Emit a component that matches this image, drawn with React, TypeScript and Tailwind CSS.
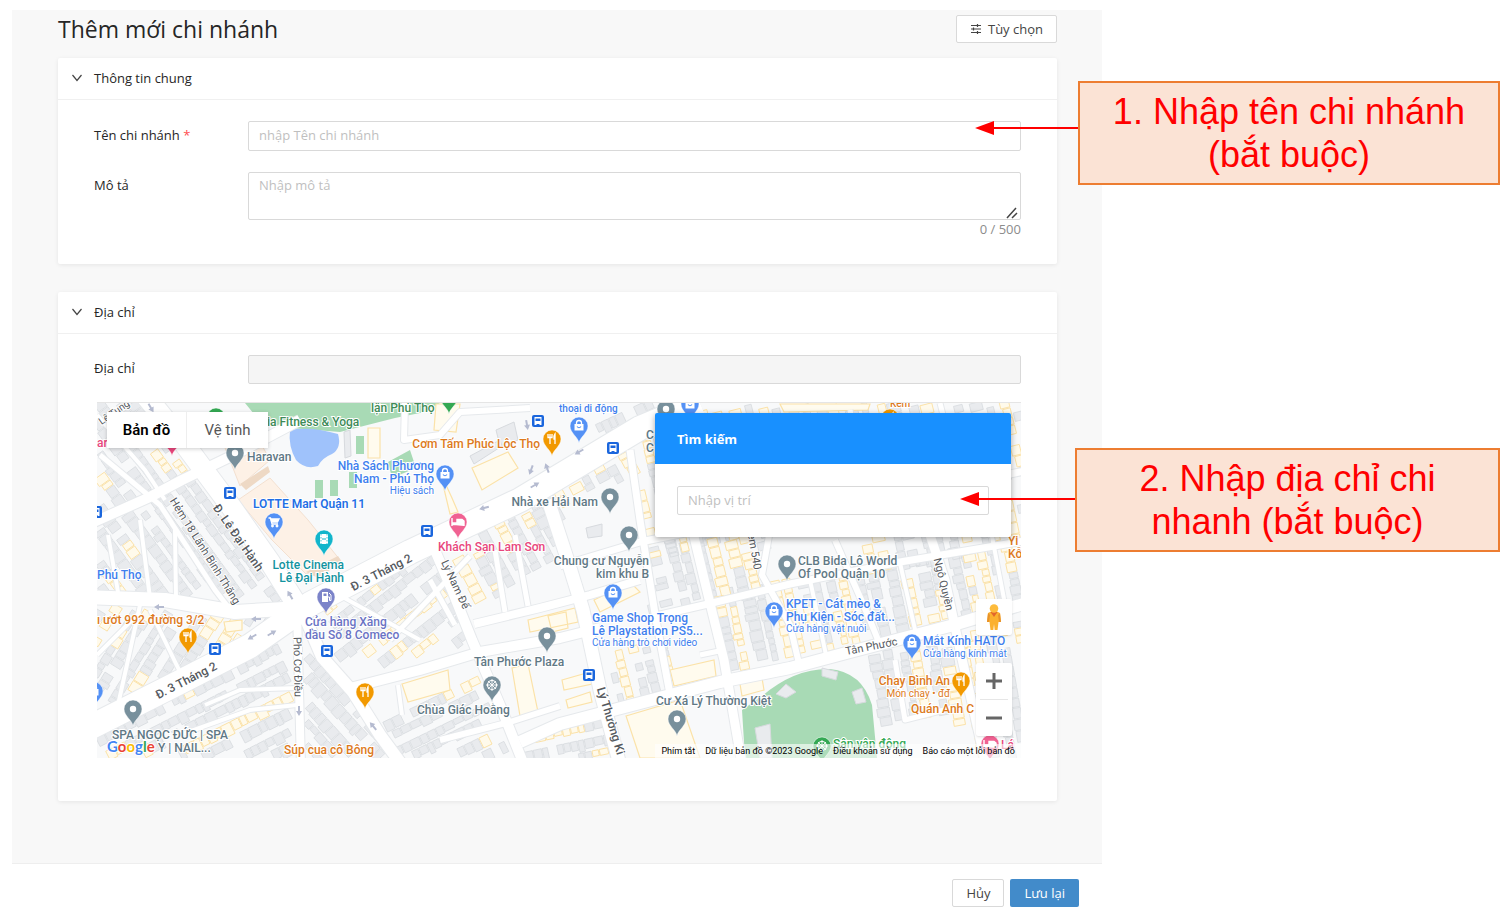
import type { ReactNode } from 'react'
import { clsx } from 'clsx'

type Point = [number, number]

interface Block {
  shape: Point[]
  angle: number
  yellow: number
  seed: number
}

interface Road {
  d: string
  width: number
}

type PinIcon = 'dot' | 'bag' | 'food' | 'bed' | 'cart' | 'film' | 'gas' | 'wheel'

interface Pin {
  x: number
  y: number
  color: string
  icon: PinIcon
}

interface Place {
  x: number
  y: number
  color: string
  lines: string[]
  sub?: string
  anchor?: 'start' | 'middle' | 'end'
  bold?: boolean
  size?: number
}

const SLATE = '#78909c'
const SLATE_TEXT = '#5f7885'
const BLUE = '#5491f5'
const BLUE_TEXT = '#3f7fee'
const ORANGE = '#f29900'
const ORANGE_TEXT = '#dd7a1c'
const PINK = '#f06292'
const GREEN = '#34a853'

// Blocks that are filled with rows of small houses
const blocks: Block[] = [
  { shape: [[97, 403], [150, 403], [180, 440], [240, 520], [288, 600], [97, 592]], angle: 54, yellow: 0.22, seed: 3 },
  { shape: [[97, 608], [285, 616], [225, 650], [97, 712]], angle: -58, yellow: 0.2, seed: 8 },
  { shape: [[97, 735], [290, 640], [290, 758], [97, 758]], angle: -27, yellow: 0.15, seed: 14 },
  { shape: [[306, 625], [395, 758], [306, 758]], angle: 48, yellow: 0.2, seed: 22 },
  { shape: [[318, 600], [440, 556], [470, 640], [350, 676]], angle: -38, yellow: 0.3, seed: 29 },
  { shape: [[376, 716], [480, 672], [508, 758], [400, 758]], angle: -26, yellow: 0.08, seed: 31 },
  { shape: [[450, 540], [640, 448], [640, 470], [560, 505], [555, 560], [470, 612]], angle: 62, yellow: 0.4, seed: 44 },
  { shape: [[612, 650], [664, 638], [670, 690], [614, 706]], angle: 76, yellow: 0.5, seed: 57 },
  { shape: [[524, 732], [604, 716], [614, 758], [528, 758]], angle: -12, yellow: 0.25, seed: 59 },
  { shape: [[640, 440], [700, 410], [1021, 403], [1021, 480], [640, 560]], angle: 76, yellow: 0.3, seed: 61 },
  { shape: [[640, 545], [760, 520], [770, 590], [650, 612]], angle: 76, yellow: 0.3, seed: 66 },
  { shape: [[714, 595], [772, 585], [900, 560], [1021, 540], [1021, 598], [850, 645], [730, 672]], angle: 78, yellow: 0.34, seed: 71 },
  { shape: [[860, 530], [1021, 500], [1021, 550], [870, 575]], angle: 78, yellow: 0.34, seed: 76 },
  { shape: [[866, 658], [1021, 618], [1021, 758], [972, 758], [955, 716], [880, 726]], angle: 80, yellow: 0.22, seed: 85 },
  { shape: [[600, 408], [690, 403], [650, 412], [600, 434]], angle: -25, yellow: 0.1, seed: 91 },
]

const roads: Road[] = [
  { d: 'M85 730 L180 682 L250 646 L310 604 L410 552 L520 500 L600 452 L640 428 L700 403', width: 24 },
  { d: 'M145 395 L180 438 L232 508 L270 562 L300 610', width: 20 },
  { d: 'M85 597 L165 600 L235 612 L300 608', width: 14 },
  { d: 'M297 610 L299 690 L301 765', width: 8 },
  { d: 'M304 615 L322 657 L353 692 L380 735 L402 765', width: 12 },
  { d: 'M350 688 L420 670 L480 652 L560 638 L600 628', width: 10 },
  { d: 'M434 548 L452 590 L472 640 L500 705 L524 765', width: 10 },
  { d: 'M474 624 L540 608 L590 595 L640 580', width: 8 },
  { d: 'M548 500 L566 555 L583 610 L600 690 L620 765', width: 13 },
  { d: 'M520 742 L560 724 L640 703 L720 682 L790 668 L850 652 L950 626 L1030 602', width: 12 },
  { d: 'M630 450 L640 520 L656 620 L670 694', width: 7 },
  { d: 'M690 520 L708 595 L724 660 L742 765', width: 9 },
  { d: 'M560 566 L640 542 L720 526 L880 500 L1030 470', width: 7 },
  { d: 'M656 616 L708 604 L790 584 L900 562 L1030 540', width: 7 },
  { d: 'M770 530 L762 575 L790 625 L800 668', width: 6 },
  { d: 'M835 540 L870 620 L880 645', width: 6 },
  { d: 'M925 520 L945 580 L960 650 L986 765', width: 9 },
  { d: 'M85 526 L150 497 L182 480 L240 452 L300 420', width: 10 },
  { d: 'M100 455 L160 505 L215 590 L232 612', width: 5 },
  { d: 'M97 415 L145 470 L165 500', width: 4 },
  { d: 'M108 535 L118 592 M140 520 L150 598 M175 530 L176 600', width: 4 },
  { d: 'M140 605 L128 660 L118 705 M150 610 L180 672 M97 655 L140 612', width: 4 },
  { d: 'M205 705 L240 690 L297 688 M180 735 L250 710 L297 705', width: 4 },
  { d: 'M405 403 L404 440 L440 435 L460 412 L530 408', width: 6 },
  { d: 'M396 560 L430 530 M390 640 L470 556 M430 580 L455 625', width: 5 },
  { d: 'M398 685 L402 715 M330 590 L420 640', width: 4 },
  { d: 'M440 740 L510 722 L560 706', width: 6 },
  { d: 'M495 550 L505 612 M515 535 L528 606', width: 5 },
  { d: 'M700 440 L730 526 M760 420 L790 512 M850 410 L870 500 M940 403 L960 484', width: 5 },
  { d: 'M985 500 L1005 604 M900 563 L916 634 M810 580 L826 655', width: 4 },
  { d: 'M895 660 L905 720 L960 706 M700 655 L724 650', width: 5 },
]

const yellowBuildings = [
  'M436 404 L460 404 L456 432 L434 430Z',
  'M368 428 L380 428 L380 458 L368 458Z',
  'M472 468 L508 452 L518 468 L482 490Z',
  'M402 684 L448 670 L450 690 L408 702Z',
  'M512 668 L528 664 L538 712 L520 716Z',
  'M528 620 L575 608 L578 622 L530 632Z',
  'M548 616 L566 612 L568 628 L552 632Z',
  'M594 600 L630 582 L640 592 L600 612Z',
  'M562 680 L590 672 L592 684 L564 690Z',
  'M566 700 L590 692 L592 702 L568 708Z',
  'M670 670 L714 660 L716 676 L674 686Z',
  'M626 716 L680 700 L700 758 L640 758Z',
  'M740 684 L762 678 L764 690 L742 696Z',
  'M224 622 L242 620 L242 630 L226 632Z',
  'M780 404 L870 404 L868 410 L784 412Z',
  'M440 472 L452 498 L458 512 L450 514Z',
]

const greyBuildings = [
  'M496 430 L514 422 L518 440 L500 446Z',
  'M470 456 L500 440 L502 446 L474 464Z',
  'M586 528 L602 524 L602 536 L588 538Z',
  'M755 728 L770 724 L772 758 L760 758Z',
  'M344 432 L350 430 L351 456 L345 458Z',
  'M776 694 L786 684 L796 692 L786 698Z',
  'M822 668 L838 672 L836 680 L822 676Z',
  'M852 692 L862 688 L866 702 L856 704Z',
]

const pins: Pin[] = [
  { x: 235, y: 453, color: SLATE, icon: 'dot' },
  { x: 445, y: 474, color: BLUE, icon: 'bag' },
  { x: 552, y: 439, color: ORANGE, icon: 'food' },
  { x: 579, y: 426, color: BLUE, icon: 'bag' },
  { x: 610, y: 497, color: SLATE, icon: 'dot' },
  { x: 629, y: 535, color: SLATE, icon: 'dot' },
  { x: 458, y: 522, color: PINK, icon: 'bed' },
  { x: 274, y: 522, color: BLUE, icon: 'cart' },
  { x: 324, y: 539, color: '#12b5cb', icon: 'film' },
  { x: 326, y: 597, color: '#7b83c9', icon: 'gas' },
  { x: 188, y: 637, color: ORANGE, icon: 'food' },
  { x: 133, y: 709, color: SLATE, icon: 'dot' },
  { x: 365, y: 692, color: ORANGE, icon: 'food' },
  { x: 547, y: 636, color: SLATE, icon: 'dot' },
  { x: 492, y: 685, color: SLATE, icon: 'wheel' },
  { x: 613, y: 593, color: BLUE, icon: 'bag' },
  { x: 677, y: 719, color: SLATE, icon: 'dot' },
  { x: 774, y: 611, color: BLUE, icon: 'bag' },
  { x: 787, y: 564, color: SLATE, icon: 'dot' },
  { x: 912, y: 643, color: BLUE, icon: 'bag' },
  { x: 961, y: 681, color: ORANGE, icon: 'food' },
  { x: 822, y: 746, color: GREEN, icon: 'wheel' },
  { x: 990, y: 744, color: PINK, icon: 'bed' },
  { x: 666, y: 409, color: SLATE, icon: 'dot' },
  { x: 690, y: 404, color: BLUE, icon: 'bag' },
  { x: 449, y: 397, color: GREEN, icon: 'dot' },
  { x: 216, y: 417, color: GREEN, icon: 'dot' },
  { x: 172, y: 439, color: '#e8467c', icon: 'dot' },
  { x: 890, y: 418, color: ORANGE, icon: 'food' },
  { x: 94, y: 691, color: BLUE, icon: 'bag' },
]

const busStops: Point[] = [
  [230, 493], [427, 531], [538, 421], [613, 448], [215, 649], [327, 651], [589, 675], [96, 512],
]

const places: Place[] = [
  { x: 267, y: 426, color: '#3d8b57', lines: ['ia Fitness & Yoga'] },
  { x: 371, y: 412, color: '#3d8b57', lines: ['lận Phú Thọ'] },
  { x: 247, y: 461, color: SLATE_TEXT, lines: ['Haravan'] },
  { x: 540, y: 448, color: ORANGE_TEXT, lines: ['Cơm Tấm Phúc Lộc Thọ'], anchor: 'end' },
  { x: 434, y: 470, color: BLUE_TEXT, lines: ['Nhà Sách Phương', 'Nam - Phú Thọ'], sub: 'Hiệu sách', anchor: 'end' },
  { x: 253, y: 508, color: '#1f6fe5', lines: ['LOTTE Mart Quận 11'], bold: true },
  { x: 598, y: 506, color: SLATE_TEXT, lines: ['Nhà xe Hải Nam'], anchor: 'end' },
  { x: 438, y: 551, color: '#e8467c', lines: ['Khách Sạn Lam Sơn'] },
  { x: 649, y: 565, color: SLATE_TEXT, lines: ['Chung cư Nguyễn', 'kim khu B'], anchor: 'end' },
  { x: 344, y: 569, color: '#12939f', lines: ['Lotte Cinema', 'Lê Đại Hành'], anchor: 'end' },
  { x: 97, y: 579, color: BLUE_TEXT, lines: ['Phú Thọ'] },
  { x: 97, y: 624, color: ORANGE_TEXT, lines: ['ı ướt 992 đường 3/2'] },
  { x: 305, y: 626, color: '#6a73c4', lines: ['Cửa hàng Xăng', 'dầu Số 8 Comeco'] },
  { x: 474, y: 666, color: SLATE_TEXT, lines: ['Tân Phước Plaza'] },
  { x: 417, y: 714, color: SLATE_TEXT, lines: ['Chùa Giác Hoằng'] },
  { x: 284, y: 754, color: ORANGE_TEXT, lines: ['Súp cua cô Bông'] },
  { x: 112, y: 739, color: SLATE_TEXT, lines: ['SPA NGỌC ĐỨC | SPA'] },
  { x: 158, y: 752, color: SLATE_TEXT, lines: ['Y | NAIL...'] },
  { x: 592, y: 622, color: BLUE_TEXT, lines: ['Game Shop Trọng', 'Lê Playstation PS5...'], sub: 'Cửa hàng trò chơi video' },
  { x: 656, y: 705, color: SLATE_TEXT, lines: ['Cư Xá Lý Thường Kiệt'] },
  { x: 798, y: 565, color: SLATE_TEXT, lines: ['CLB Bida Lô World', 'Of Pool Quận 10'] },
  { x: 786, y: 608, color: BLUE_TEXT, lines: ['KPET - Cát mèo &', 'Phụ Kiện - Sóc đất...'], sub: 'Cửa hàng vật nuôi' },
  { x: 923, y: 645, color: BLUE_TEXT, lines: ['Mắt Kính HATO'], sub: 'Cửa hàng kính mát' },
  { x: 950, y: 685, color: ORANGE_TEXT, lines: ['Chay Bình An'], sub: 'Món chay • đđ', anchor: 'end' },
  { x: 911, y: 713, color: ORANGE_TEXT, lines: ['Quán Anh C'] },
  { x: 833, y: 748, color: GREEN, lines: ['Sân vận động'] },
  { x: 559, y: 412, color: BLUE_TEXT, lines: ['thoại di động'], size: 10 },
  { x: 890, y: 407, color: ORANGE_TEXT, lines: ['Kem'], size: 10 },
  { x: 646, y: 439, color: SLATE_TEXT, lines: ['C', 'C'] },
  { x: 1008, y: 545, color: ORANGE_TEXT, lines: ['Yi', 'Kỗ'] },
  { x: 97, y: 447, color: '#e8467c', lines: ['ar'] },
  { x: 1001, y: 749, color: '#e8467c', lines: ['Lá'] },
]

const streets = [
  { x: 383, y: 576, angle: -27, text: 'Đ. 3 Tháng 2', size: 12, bold: true },
  { x: 188, y: 684, angle: -27, text: 'Đ. 3 Tháng 2', size: 12, bold: true },
  { x: 235, y: 540, angle: 55, text: 'Đ. Lê Đại Hành', size: 12, bold: true },
  { x: 202, y: 553, angle: 58, text: 'Hẻm 18 Lãnh Binh Thăng', size: 11 },
  { x: 294, y: 667, angle: 89, text: 'Phó Cơ Điều', size: 11 },
  { x: 452, y: 586, angle: 65, text: 'Lý Nam Đế', size: 11 },
  { x: 607, y: 722, angle: 73, text: 'Lý Thường Ki', size: 12, bold: true },
  { x: 872, y: 650, angle: -11, text: 'Tân Phước', size: 11 },
  { x: 940, y: 585, angle: 76, text: 'Ngô Quyền', size: 11 },
  { x: 751, y: 552, angle: 80, text: 'ẻm 540', size: 11 },
  { x: 116, y: 415, angle: -35, text: 'Lê Tung', size: 10 },
]

// one way arrows: x, y, rotation
const arrows: [number, number, number][] = [
  [159, 607, 180], [256, 619, 180], [252, 637, 150], [272, 633, -30], [290, 595, -120],
  [299, 711, 90], [373, 726, -130], [484, 508, 165], [535, 485, -30], [531, 470, 110],
  [547, 468, -110], [527, 425, 80], [579, 452, 150], [151, 408, 60],
]

function inside([x, y]: Point, shape: Point[]) {
  let hit = false
  for (let i = 0, j = shape.length - 1; i < shape.length; j = i++) {
    const [xi, yi] = shape[i]
    const [xj, yj] = shape[j]
    if (yi > y !== yj > y && x < ((xj - xi) * (y - yi)) / (yj - yi) + xi) hit = !hit
  }
  return hit
}

function buildHouses() {
  let grey = ''
  let yellow = ''
  for (const block of blocks) {
    let seed = block.seed * 7919
    const random = () => {
      seed = (seed * 1103515245 + 12345) % 2147483648
      return seed / 2147483648
    }
    const xs = block.shape.map((p) => p[0])
    const ys = block.shape.map((p) => p[1])
    const cx = (Math.min(...xs) + Math.max(...xs)) / 2
    const cy = (Math.min(...ys) + Math.max(...ys)) / 2
    const reach = Math.hypot(Math.max(...xs) - cx, Math.max(...ys) - cy)
    const a = (block.angle * Math.PI) / 180
    const rotate = (u: number, v: number): Point => [
      cx + u * Math.cos(a) - v * Math.sin(a),
      cy + u * Math.sin(a) + v * Math.cos(a),
    ]
    let row = 0
    for (let v = -reach; v < reach; row++) {
      const depth = 9 + random() * 5
      let rowYellow = random() < block.yellow
      for (let u = -reach; u < reach; ) {
        const w = 5 + random() * 6
        if (random() < 0.2) rowYellow = random() < block.yellow
        if (random() > 0.1 && inside(rotate(u + w / 2, v + depth / 2), block.shape)) {
          const d = depth - random() * 4
          const corners = [rotate(u, v), rotate(u + w, v), rotate(u + w, v + d), rotate(u, v + d)]
          const path = 'M' + corners.map((c) => c.map((n) => n.toFixed(1)).join(' ')).join('L') + 'Z'
          if (rowYellow) yellow += path
          else grey += path
        }
        u += w + 1
      }
      v += depth + (row % 2 ? 6 : 1)
    }
  }
  return { grey, yellow }
}

const houses = buildHouses()

function PinGlyph({ icon }: { icon: PinIcon }) {
  switch (icon) {
    case 'bag':
      return (
        <g fill="none" stroke="#fff">
          <path d="M-4.500 -2H4.500V4.500H-4.500Z" fill="#fff" stroke="none" />
          <path d="M-2.500 -2V-3A2.500 2.500 0 0 1 2.500 -3V-2" strokeWidth="1.300" />
          <path d="M-2 0.500Q0 3 2 0.500" stroke={BLUE} strokeWidth="1.200" />
        </g>
      )
    case 'food':
      return (
        <g stroke="#fff" fill="none" strokeWidth="1.300">
          <path d="M-4 -5V-1.500H0V-5M-2 -5V5" />
          <path d="M3 5V-5Q1.500 -3 2 0H3" fill="#fff" />
        </g>
      )
    case 'bed':
      return <path d="M-6 -4V4M-6 2.500H6V4M-6 1H6V-1L4 -2.500H-1V1" stroke="#fff" strokeWidth="1.400" fill="#fff" />
    case 'cart':
      return (
        <g stroke="#fff" fill="none" strokeWidth="1.300">
          <path d="M-5.500 -4H-3.500L-2 2H4" />
          <path d="M-3 -3H5L3.500 0H-2.300Z" fill="#fff" />
          <circle cx="-1.500" cy="4" r="0.800" />
          <circle cx="3" cy="4" r="0.800" />
        </g>
      )
    case 'film':
      return (
        <g>
          <path d="M-4 -5H4V5H-4Z" fill="#fff" />
          <path d="M-3 -5V5M3 -5V5" stroke="#12b5cb" strokeWidth="0.800" strokeDasharray="1.500 1.500" />
          <path d="M-2 0H2" stroke="#12b5cb" />
        </g>
      )
    case 'gas':
      return (
        <g>
          <path d="M-4 -5H2V5H-4Z" fill="#fff" />
          <path d="M-2.500 -3.500H0.500V-1H-2.500Z" fill="#7b83c9" />
          <path d="M2 0H3.500V3.500H5V-2L3 -4" stroke="#fff" fill="none" />
        </g>
      )
    case 'wheel':
      return (
        <g stroke="#fff" fill="none" strokeWidth="1.200">
          <circle r="4.500" />
          <path d="M0 -6V6M-6 0H6M-4 -4L4 4M4 -4L-4 4" strokeWidth="0.900" />
        </g>
      )
    default:
      return <circle r="3.200" fill="#fff" />
  }
}

function CityMap() {
  return (
    <svg
      viewBox="97 403 924 355"
      preserveAspectRatio="xMidYMid slice"
      className="block h-full w-full font-[Roboto,sans-serif]"
      role="img"
      aria-label="Bản đồ"
    >
      <rect x="0" y="300" width="1200" height="560" fill="#f8f9fa" />
      <path d="M212 403H440L425 412L395 418L340 432L290 428L262 424L245 403Z" fill="#a8dab5" />
      <path d="M742 710L762 696Q795 668 830 669Q862 672 872 705L877 758H745Z" fill="#a8dab5" />
      <path d="M388 462L410 450L416 468L392 478Z M356 436H364V454H356Z M315 480H323V498H315Z M330 480H338V496H330Z M349 472H357V488H349Z" fill="#a8dab5" />
      <path d="M290 430Q310 426 338 434Q342 448 332 454Q322 458 318 466Q305 470 296 460Q288 446 290 430Z" fill="#9fc2fb" />
      <path d="M238 500L270 478L308 520L340 560L306 574L272 540Z M218 430L250 424L270 460L240 486Z" fill="#fdf1e6" stroke="#f3e0d0" />
      <path d="M240 484L268 466L270 472L246 490Z M306 572L338 556L342 562L318 578Z" fill="#eed9c5" />

      <path d={houses.grey} fill="#e9ebee" stroke="#d7dade" strokeWidth="0.800" />
      <path d={houses.yellow} fill="#fffaeb" stroke="#fbe2a8" strokeWidth="1" />
      <path d={yellowBuildings.join(' ')} fill="#fffbee" stroke="#fbe2a8" strokeWidth="1.200" />
      <path d={greyBuildings.join(' ')} fill="#e9ebee" stroke="#d7dade" />

      {roads.map((r) => (
        <path key={r.d} d={r.d} fill="none" stroke="#e6e9ec" strokeWidth={r.width + 2} strokeLinejoin="round" />
      ))}
      {roads.map((r) => (
        <path key={r.d} d={r.d} fill="none" stroke="#fff" strokeWidth={r.width} strokeLinejoin="round" />
      ))}

      {arrows.map(([x, y, r]) => (
        <path
          key={`${x}-${y}`}
          d="M-5 -1H0V-3L5 0L0 3V1H-5Z"
          fill="#b5bbd0"
          transform={`translate(${x} ${y}) rotate(${r})`}
        />
      ))}

      {busStops.map(([x, y]) => (
        <g key={`${x}-${y}`} transform={`translate(${x} ${y})`}>
          <rect x="-6" y="-6" width="12" height="12" rx="2" fill="#1a66dd" />
          <path d="M-3.500 -4H3.500V3H-3.500Z" fill="#fff" />
          <path d="M-2.500 -2.500H2.500V0H-2.500Z" fill="#1a66dd" />
          <path d="M-3.500 3.500H-1.500M1.500 3.500H3.500" stroke="#fff" />
        </g>
      ))}

      <g fill="#55595e" stroke="#fff" strokeWidth="2" paintOrder="stroke" textAnchor="middle">
        {streets.map((s) => (
          <text
            key={`${s.x}-${s.text}`}
            fontSize={s.size}
            fontWeight={s.bold ? 500 : 400}
            transform={`translate(${s.x} ${s.y}) rotate(${s.angle})`}
          >
            {s.text}
          </text>
        ))}
      </g>

      {pins.map((p) => (
        <g key={`${p.x}-${p.y}`} transform={`translate(${p.x} ${p.y})`}>
          <path d="M0 17C-1 11 -9 7 -9 0A9 9 0 1 1 9 0C9 7 1 11 0 17Z" fill={p.color} stroke="#fff" strokeWidth="0.500" />
          <PinGlyph icon={p.icon} />
        </g>
      ))}

      {places.map((p) => (
        <g key={`${p.x}-${p.y}`} fill={p.color} stroke="#fff" strokeWidth="2" paintOrder="stroke" textAnchor={p.anchor}>
          {p.lines.map((line, i) => (
            <text key={i} x={p.x} y={p.y + i * 13} fontSize={p.size ?? 12} fontWeight={p.bold ? 600 : 500}>
              {line}
            </text>
          ))}
          {p.sub && (
            <text x={p.x} y={p.y + p.lines.length * 12} fontSize="10">
              {p.sub}
            </text>
          )}
        </g>
      ))}
    </svg>
  )
}

function Card({ title, children }: { title: string; children: ReactNode }) {
  return (
    <section className="rounded-xs bg-white shadow-[0_1px_4px_rgba(0,0,0,0.08)]">
      <button type="button" className="flex h-[42px] w-full items-center gap-[11px] border-b border-[#f0f0f0] px-[13px] pb-[2px] text-left font-medium">
        <svg viewBox="0 0 12 12" className="h-3 w-3" fill="none" stroke="#444" strokeWidth="1.200">
          <path d="M1.500 3L6 8.500L10.500 3" />
        </svg>
        {title}
      </button>
      {children}
    </section>
  )
}

const fieldClass =
  'block w-full rounded-xs border border-[#d9d9d9] px-[10px] pb-[2px] outline-none placeholder:text-[#bfbfbf]'

function MapPanel() {
  return (
    <div className="relative ml-[3px] h-[356px] overflow-hidden border-t border-[#e5e5e5]">
      <CityMap />

      <div className="absolute top-[9px] left-[10px] flex bg-white font-[Roboto,sans-serif] text-[15px] shadow-[0_1px_4px_rgba(0,0,0,0.2)]">
        <button type="button" className="h-9 w-20 border-r border-[#eee] font-semibold text-black">
          Bản đồ
        </button>
        <button type="button" className="h-9 w-[81px] text-[#565656]">
          Vệ tinh
        </button>
      </div>

      <div className="absolute top-[10px] right-[10px] w-[356px] rounded-xs bg-white shadow-[0_2px_6px_rgba(0,0,0,0.35)]">
        <div className="flex h-[51px] items-center rounded-t-xs bg-[#1890ff] px-[22px] font-bold text-white">
          Tìm kiếm
        </div>
        <div className="px-[22px] pt-[22px] pb-[22px]">
          <input type="text" aria-label="Nhập vị trí" placeholder="Nhập vị trí" className={clsx(fieldClass, 'h-[29px]')} />
        </div>
      </div>

      <div className="absolute right-[9px] bottom-[22px] flex w-9 flex-col gap-7">
        <button type="button" aria-label="Người hình mắc áo" className="flex h-9 items-center justify-center rounded-xs bg-white shadow-sm">
          <svg viewBox="0 0 18 28" className="h-7 w-[18px]">
            <path d="M3 10Q9 6 15 10L16 19H13.500L12.500 27H9.700L9 21L8.300 27H5.500L4.500 19H2Z" fill="#fbb12f" />
            <path d="M3 10L2 19H4L5 12ZM15 10L16 19H14L13 12Z" fill="#e8922a" />
            <path d="M5.500 9H12.500L9 14Z" fill="#e2662c" />
            <circle cx="9" cy="5.500" r="4.300" fill="#fdbb3b" />
          </svg>
        </button>
        <div className="flex flex-col rounded-xs bg-white shadow-sm">
          <button type="button" aria-label="Phóng to" className="flex h-9 items-center justify-center">
            <svg viewBox="0 0 16 16" className="h-4 w-4">
              <path d="M6.500 0H9.500V6.500H16V9.500H9.500V16H6.500V9.500H0V6.500H6.500Z" fill="#666" />
            </svg>
          </button>
          <div className="mx-1 border-t border-[#e6e6e6]" />
          <button type="button" aria-label="Thu nhỏ" className="flex h-9 items-center justify-center">
            <svg viewBox="0 0 16 16" className="h-4 w-4">
              <path d="M0 6.500H16V9.500H0Z" fill="#666" />
            </svg>
          </button>
        </div>
      </div>

      <div className="absolute bottom-0 left-[10px] font-[Lato,sans-serif] text-[15px] leading-6 font-bold [paint-order:stroke] [-webkit-text-stroke:2px_#fff]">
        <span className="text-[#4285f4]">G</span>
        <span className="text-[#ea4335]">o</span>
        <span className="text-[#fbbc04]">o</span>
        <span className="text-[#4285f4]">g</span>
        <span className="text-[#34a853]">l</span>
        <span className="text-[#ea4335]">e</span>
      </div>

      <div className="absolute right-0 bottom-0 flex gap-[10px] bg-white/60 px-[6px] font-[Roboto,sans-serif] text-[9px] leading-[14px] text-black">
        <button type="button">Phím tắt</button>
        <span>Dữ liệu bản đồ ©2023 Google</span>
        <a href="#terms">Điều khoản sử dụng</a>
        <a href="#report">Báo cáo một lỗi bản đồ</a>
      </div>
    </div>
  )
}

interface CalloutProps {
  children: ReactNode
  arrow: ReactNode
  className: string
}

function Callout({ children, arrow, className }: CalloutProps) {
  return (
    <div className={clsx('absolute right-2 flex items-start', className)}>
      {arrow}
      <p className="flex h-[104px] flex-1 items-center justify-center border-2 border-[#ed7d31] bg-[#fbe3d5] px-6 text-center font-['Liberation_Sans',Arial,sans-serif] text-4xl leading-[43px] text-[#ff0000]">
        {children}
      </p>
    </div>
  )
}

export default function App() {
  return (
    <div className="relative min-h-screen bg-white pt-[10px] pl-3 font-['Open_Sans',sans-serif] text-[13px] leading-5 text-[#262626]">
      <form className="mr-[406px]">
        <main className="border-b border-[#eee] bg-[#f8f8f8] pr-[45px] pb-[62px] pl-[46px]">
          <header className="flex h-12 items-start justify-between">
            <h1 className="text-[23px] leading-[38px]">Thêm mới chi nhánh</h1>
            <button type="button" className="mt-[5px] flex h-7 items-center gap-[6px] rounded-xs border border-[#d9d9d9] bg-white px-[13px] text-[#444]">
              <svg viewBox="0 0 12 12" className="h-3 w-3" fill="none" stroke="#444" strokeWidth="1.200">
                <path d="M1 2.500H11M1 6H11M1 9.500H11M7.500 1V4M3.500 4.500V7.500M7.500 8V11" />
              </svg>
              Tùy chọn
            </button>
          </header>

          <div className="flex flex-col gap-7">
            <Card title="Thông tin chung">
              <div className="flex flex-col gap-[21px] px-9 pt-[21px] pb-[26px]">
                <div className="flex">
                  <label htmlFor="branch-name" className="w-[154px] shrink-0 pt-1">
                    Tên chi nhánh <span className="text-[#ff4d4f]">*</span>
                  </label>
                  <input id="branch-name" type="text" placeholder="nhập Tên chi nhánh" className={clsx(fieldClass, 'h-[30px]')} />
                </div>
                <div className="flex">
                  <label htmlFor="description" className="w-[154px] shrink-0 pt-[3px]">
                    Mô tả
                  </label>
                  <div className="relative flex-1">
                    <textarea id="description" maxLength={500} placeholder="Nhập mô tả" className={clsx(fieldClass, 'h-12 resize-none pt-[2px]')} />
                    <svg viewBox="0 0 12 12" className="absolute top-[35px] right-[3px] h-3 w-3" stroke="#444" strokeWidth="1.500">
                      <path d="M1 11L10 1M6 11L11 6" />
                    </svg>
                    <p className="text-right leading-[18px] text-[#8c8c8c]">0 / 500</p>
                  </div>
                </div>
              </div>
            </Card>

            <Card title="Địa chỉ">
              <div className="px-9 pt-[21px] pb-[43px]">
                <div className="mb-[18px] flex">
                  <label htmlFor="address" className="w-[154px] shrink-0 pt-[3px]">
                    Địa chỉ
                  </label>
                  <input id="address" type="text" disabled className={clsx(fieldClass, 'h-[29px] bg-[#f5f5f5]')} />
                </div>
                <MapPanel />
              </div>
            </Card>
          </div>
        </main>

        <footer className="flex justify-end gap-[6px] py-[15px] pr-[23px]">
          <button type="button" className="h-7 rounded-xs border border-[#d9d9d9] bg-white px-[13px] text-[#444]">
            Hủy
          </button>
          <button type="submit" className="h-7 rounded-xs bg-[#428bca] px-[14px] text-white">
            Lưu lại
          </button>
        </footer>
      </form>

      <Callout
        className="top-[81px] w-[525px]"
        arrow={
          <svg viewBox="0 0 103 14" className="mt-10 h-[14px] w-[103px]" fill="#ff0000">
            <path d="M0 7L19 0V6H103V8H19V14Z" />
          </svg>
        }
      >
        <span>1. Nhập tên chi nhánh (bắt buộc)</span>
      </Callout>
      <Callout
        className="top-[448px] w-[540px]"
        arrow={
          <svg viewBox="0 0 115 14" className="mt-11 h-[14px] w-[115px]" fill="#ff0000">
            <path d="M0 7L19 0V6H115V8H19V14Z" />
          </svg>
        }
      >
        <span>2. Nhập địa chỉ chi nhanh (bắt buộc)</span>
      </Callout>
    </div>
  )
}
